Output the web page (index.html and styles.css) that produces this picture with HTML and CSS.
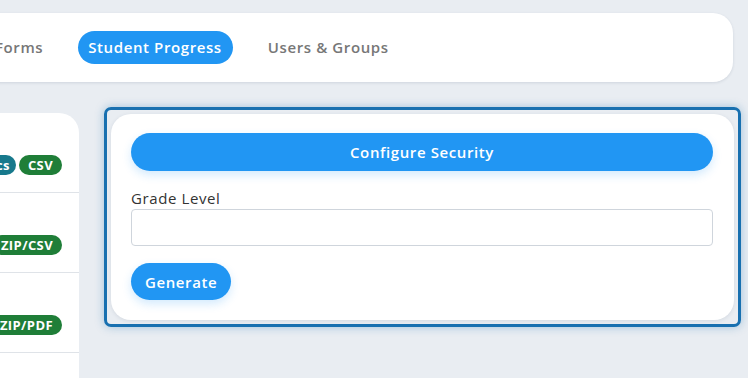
FILE: index.html
```html
<!DOCTYPE html>
<html lang="en">
<head>
    <meta charset="UTF-8">
    <meta name="viewport" content="width=device-width, initial-scale=1.0">
    <title>Student Progress</title>
    <link rel="stylesheet" href="styles.css">
</head>
<body>
    <div class="page">
        <nav class="topnav">
            <a class="tab" href="#">Forms</a>
            <a class="tab active" href="#">Student Progress</a>
            <a class="tab" href="#">Users &amp; Groups</a>
        </nav>

        <div class="content">
            <div class="export-list">
                <div class="export-row">
                    <span class="badge teal">Docs</span>
                    <span class="badge green">CSV</span>
                </div>
                <div class="export-row">
                    <span class="badge green">ZIP/CSV</span>
                </div>
                <div class="export-row">
                    <span class="badge green">ZIP/PDF</span>
                </div>
                <div class="export-row"></div>
            </div>

            <div class="focus-frame">
                <div class="card">
                    <button class="btn btn-wide" type="button">Configure Security</button>
                    <label class="field-label" for="grade">Grade Level</label>
                    <input class="field" id="grade" type="text">
                    <button class="btn" type="button">Generate</button>
                </div>
            </div>
        </div>
    </div>
</body>
</html>
```

FILE: styles.css
```css
body {
    margin: 0;
    background-color: #e9edf2;
    font-family: "Open Sans", "Liberation Sans", sans-serif;
    letter-spacing: 0.6px;
    overflow: hidden;
}

.page {
    padding: 13px 7px 0 0;
}

/* top tabs */
.topnav {
    height: 69px;
    margin-left: -35px;
    margin-right: 8px;
    padding-left: 20px;
    background-color: #fff;
    border-radius: 20px;
    box-shadow: 0 1px 3px rgba(30, 50, 80, 0.12);
    display: flex;
    align-items: center;
    gap: 25px;
}

.tab {
    color: #777;
    font-size: 15px;
    font-weight: 600;
    text-decoration: none;
    padding: 6px 10px;
    line-height: 21px;
    border-radius: 17px;
}

.tab.active {
    background-color: #2196f3;
    color: #fff;
    padding: 6px 11px 6px 10px;
}

.content {
    display: flex;
    align-items: flex-start;
    gap: 25px;
    margin-top: 25px;
}

/* left export list */
.export-list {
    width: 200px;
    margin-left: -121px;
    margin-top: 6px;
    flex-shrink: 0;
    background-color: #fff;
    border-radius: 0 20px 0 0;
}

.export-row {
    height: 80px;
    box-sizing: border-box;
    padding: 24px 17px 0 0;
    display: flex;
    justify-content: flex-end;
    align-items: center;
    gap: 3px;
    border-bottom: 1px solid #dfe3e8;
}

.badge {
    color: #fff;
    font-size: 13px;
    font-weight: 700;
    line-height: 20px;
    padding: 0 9px;
    border-radius: 10px;
    letter-spacing: 0.4px;
}

.badge.teal {
    background-color: #17798c;
    padding-right: 6px;
}

.badge.green {
    background-color: #1f7e38;
}

/* right card */
.focus-frame {
    flex: 1;
    border: 3px solid #1870b0;
    border-radius: 7px;
    padding: 4px;
    box-shadow: 0 0 10px rgba(24, 112, 176, 0.35);
}

.card {
    background-color: #fff;
    border-radius: 20px;
    padding: 19px 21px 20px 20px;
    display: flex;
    flex-direction: column;
    align-items: flex-start;
    box-shadow: 0 1px 4px rgba(30, 50, 80, 0.1);
}

.btn {
    font-family: inherit;
    letter-spacing: inherit;
    font-size: 15px;
    font-weight: 600;
    color: #fff;
    background-color: #2196f3;
    border: none;
    border-radius: 19px;
    height: 37px;
    padding: 0 14px;
    box-shadow: 0 4px 10px rgba(33, 150, 243, 0.2);
}

.btn-wide {
    align-self: stretch;
    height: 38px;
}

.field-label {
    color: #333;
    font-size: 15px;
    margin-top: 16px;
    line-height: 22px;
}

.field {
    align-self: stretch;
    height: 37px;
    box-sizing: border-box;
    border: 1px solid #cfd5dc;
    border-radius: 4px;
    margin-bottom: 17px;
}
```
